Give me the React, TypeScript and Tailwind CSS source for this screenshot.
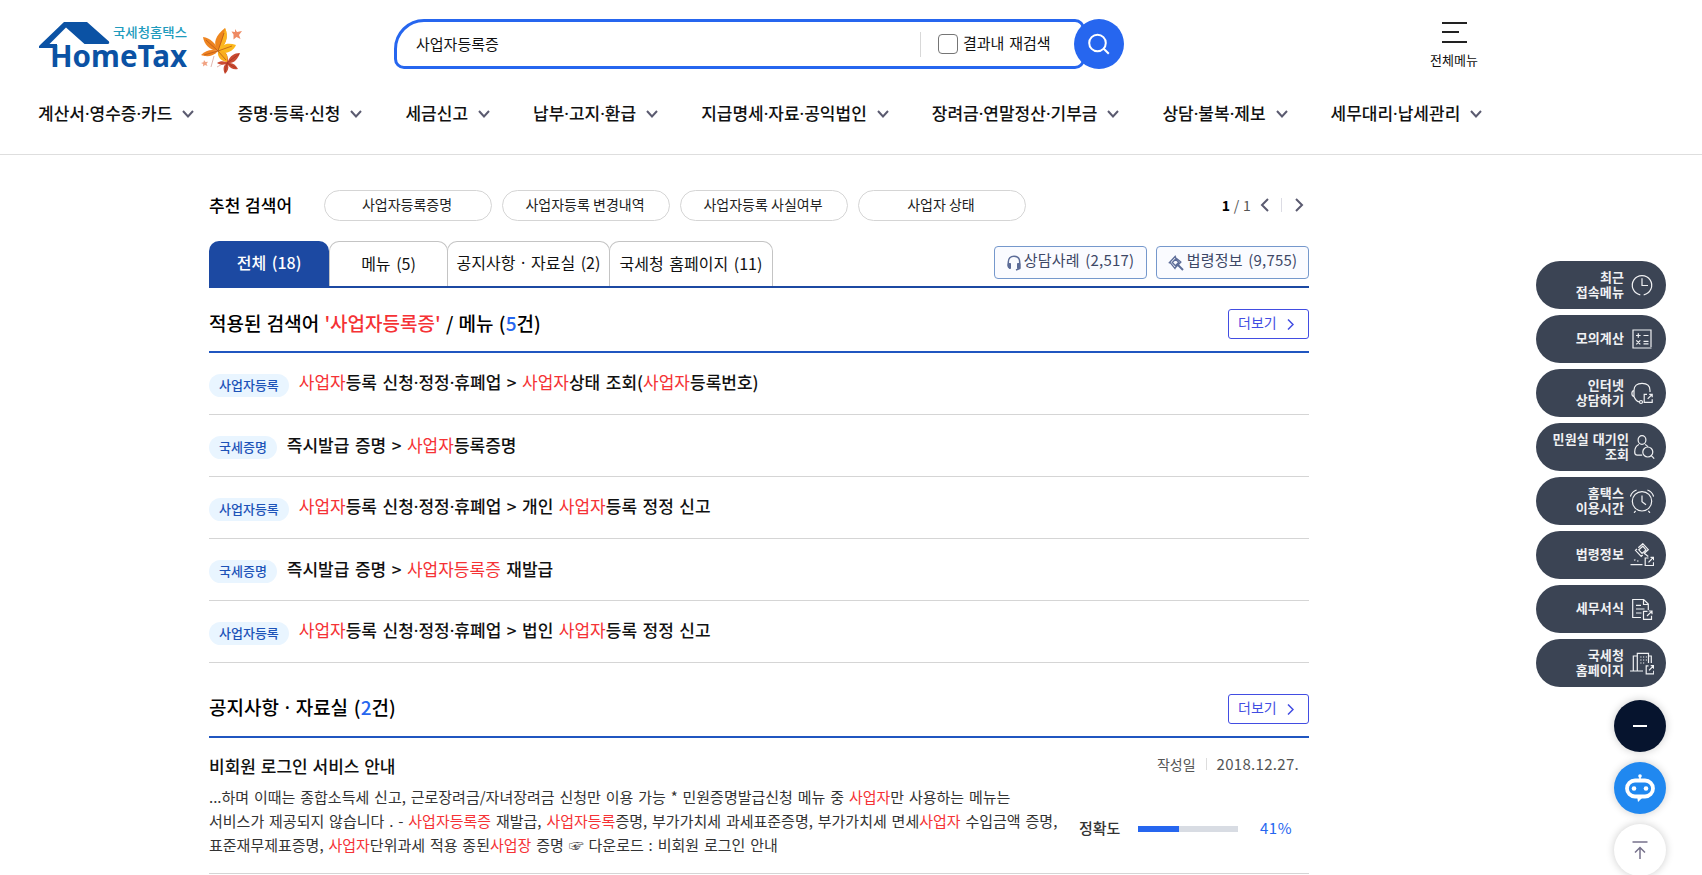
import type { ReactNode } from 'react';

const navItems = [
  '계산서·영수증·카드',
  '증명·등록·신청',
  '세금신고',
  '납부·고지·환급',
  '지급명세·자료·공익법인',
  '장려금·연말정산·기부금',
  '상담·불복·제보',
  '세무대리·납세관리',
];

const keywords = ['사업자등록증명', '사업자등록 변경내역', '사업자등록 사실여부', '사업자 상태'];

// text wrapped in [ ] is highlighted
const menuResults = [
  { tag: '사업자등록', text: '[사업자]등록 신청·정정·휴폐업 > [사업자]상태 조회([사업자]등록번호)' },
  { tag: '국세증명', text: '즉시발급 증명 > [사업자]등록증명' },
  { tag: '사업자등록', text: '[사업자]등록 신청·정정·휴폐업 > 개인 [사업자]등록 정정 신고' },
  { tag: '국세증명', text: '즉시발급 증명 > [사업자등록증] 재발급' },
  { tag: '사업자등록', text: '[사업자]등록 신청·정정·휴폐업 > 법인 [사업자]등록 정정 신고' },
];

const noticeLines = [
  '...하며 이때는 종합소득세 신고, 근로장려금/자녀장려금 신청만 이용 가능 * 민원증명발급신청 메뉴 중 [사업자]만 사용하는 메뉴는',
  '서비스가 제공되지 않습니다 . - [사업자등록증] 재발급, [사업자등록]증명, 부가가치세 과세표준증명, 부가가치세 면세[사업자] 수입금액 증명,',
  '표준재무제표증명, [사업자]단위과세 적용 종된[사업장] 증명 ☞ 다운로드 : 비회원 로그인 안내',
];

// highlights [ ] parts and keeps the middle dot narrow
const RichText = ({ text }: { text: string }) => (
  <>
    {text.split(/(\[[^\]]+\]|·)/).map((part, i) => {
      if (part === '·') {
        return (
          <span key={i} className="font-['Noto_Sans',sans-serif]">
            ·
          </span>
        );
      }
      return part.startsWith('[') ? (
        <span key={i} className="font-normal text-[#f53235]">
          {part.slice(1, -1)}
        </span>
      ) : (
        part
      );
    })}
  </>
);

const Line = ({ children }: { children: ReactNode }) => (
  <svg viewBox="0 0 24 24" className="h-6 w-6 shrink-0" fill="none" stroke="currentColor" strokeWidth="1.2">
    {children}
  </svg>
);

const quickMenu = [
  {
    lines: ['최근', '접속메뉴'],
    icon: (
      <Line>
        <path d="M10.3 21.8a9.7 9.7 0 1 1 3.4 0M12 5.3v7.2h6" />
      </Line>
    ),
  },
  {
    lines: ['모의계산'],
    icon: (
      <Line>
        <path d="M21 20V3H3v18h18.5M6 8.5h4.6M8.3 6.2v4.6M13.5 8.5h5M6.3 13.4l4 4M10.3 13.4l-4 4M13.5 14.3h5M13.5 16.8h5" />
      </Line>
    ),
  },
  {
    lines: ['인터넷', '상담하기'],
    icon: (
      <Line>
        <path d="M4 15.5V9.2C4 4.8 7 2.4 12 2.4s8 2.6 8 7v1.6M4 9.5c-2.8.2-2.8 5.8 0 6M4 15.5c1.3 3.3 3 5 5.2 5.4" />
        <circle cx="11" cy="21" r="1.5" />
        <path d="M17 13.3h-2.8v8h8v-3M17.7 17.8l4.3-4.3M19.2 13.3h3v3" />
      </Line>
    ),
  },
  {
    lines: ['민원실 대기인', '조회'],
    icon: (
      <Line>
        <ellipse cx="10" cy="5" rx="3.9" ry="4.3" />
        <path d="M7 9.5c-3 1.3-4.3 4-4.3 7.5 0 2.2.7 3.2 2.5 3.2h5M13 9.5c1.2.5 2.2 1.3 2.8 2.3" />
        <circle cx="15.8" cy="17" r="5" />
        <path d="m19.3 20.7 2.9 2.9" />
      </Line>
    ),
  },
  {
    lines: ['홈택스', '이용시간'],
    icon: (
      <Line>
        <circle cx="12" cy="12.3" r="9.7" />
        <path d="M12 6.5v6.3l4 3M.4 7.5C1.3 4.3 3.3 2.2 6.6 1M23.6 7.5c-.9-3.2-2.9-5.3-6.2-6.5M5.6 21.8l-1.5 2M18.4 21.8l1.5 2" />
      </Line>
    ),
  },
  {
    lines: ['법령정보'],
    icon: (
      <Line>
        <path d="m8.3 4.700 4.500-4 5.500 6-4.500 4M7 5.800l-1.500 1.500 5.700 6.200 1.500-1.500M8.800 6.800l4-3.600 3.200 3.700-4 3.500zM14.500 10.500l3.800 3M.5 21.600h12M4 17.300l1.500-.6M7 18h1.500" />
        <path d="M18.500 15h-3.300v7.500h8.300v-3.300M18.500 19.300l4.800-4.800M20.500 14.300h3v3" />
      </Line>
    ),
  },
  {
    lines: ['세무서식'],
    icon: (
      <Line>
        <path d="M11 20.5H2.7v-18h11l4.6 4.6V13M13.5 2.5v5h4.8M6 8.3h5M6 12h8.5M6 16h5.5" />
        <path d="M17.5 14.3h-4v8h8v-3.5M17 19l4.7-4.7M18.7 14h3.3v3.2" />
      </Line>
    ),
  },
  {
    lines: ['국세청', '홈페이지'],
    icon: (
      <Line>
        <path d="M0 20h13M3.3 20V5h3M7.3 20V2.3h11.2V12M18.5 5h2.8v7M10.3 6h1.2M13 6h1.2M15.8 6H17M10.3 9h1.2M13 9h1.2M15.8 9H17M10.3 12h1.2M13 12h1.2M7.3 5h-2" />
        <path d="M18.5 14.8h-2.3v8h7.5v-3M19 19.3l4.3-4.3M20.7 14.7h3v3" />
      </Line>
    ),
  },
];

const Logo = () => (
  <svg width="149" height="56" viewBox="0 0 149 56" className="overflow-visible">
    <path d="M25 2h23l22 19.5q.8 2.5-1.5 2.5H45.5L27 7.5 10.5 24H18v4H0q-.5-2 1-3z" fill="#0b52a4" />
    <text
      x="74"
      y="17"
      fontSize="13"
      fontWeight="500"
      textLength="74"
      lengthAdjust="spacingAndGlyphs"
      fill="#209bbd"
      fontFamily="'Noto Sans CJK KR', sans-serif"
    >
      국세청홈택스
    </text>
    <text
      x="11"
      y="47"
      fontSize="30"
      fontWeight="700"
      textLength="137"
      lengthAdjust="spacingAndGlyphs"
      fill="#0b52a4"
      fontFamily="'Noto Sans', 'Open Sans', sans-serif"
    >
      HomeTax
    </text>
  </svg>
);

const Leaves = () => (
  <svg width="42" height="48" viewBox="0 0 42 48">
    <path d="M13 29 10 40M25 35l-9 5" stroke="#d9a69c" strokeWidth=".8" fill="none" />
    <path
      d="M25 35c-3-1-6-1-9 1 3 2 6 2 9 1-3 2-3 6-1 10 3-3 4-6 3-9 3 4 6 5 10 4-2-4-5-6-8-6 4 0 8-4 10-10-6 0-10 3-12 8 0-4-1-7-3-9-2 3-1 7 1 10z"
      fill="#cb4a31"
    />
    <path d="M24 45l2-9 12-9M26 36l9 5" stroke="#93301f" strokeWidth=".6" fill="none" />
    <path d="M17 24C11 22 5 23 0 28c5 2 12 2 17-4z" fill="#ef8322" />
    <path d="M17 24C15 16 9 11 2 10c1 7 6 13 15 14z" fill="#ee8420" />
    <path d="M17 24C11 16 15 8 24 1c4 9 1 17-7 23z" fill="#ee861d" />
    <path d="M17 24C20 17 23 10 24 1c4 9 1 17-7 23z" fill="#fbb520" />
    <path d="M17 24c3-7 10-9 18-6-3 7-11 10-18 6z" fill="#fcb81c" />
    <path d="M17 24c7-1 11 4 9 11-6-1-10-5-9-11z" fill="#f9ae1c" />
    <path d="m17 24 6-18M17 24l14-5M17 24l8 9M17 24 5 13M17 24 3 28" stroke="#b9591a" strokeWidth=".8" fill="none" />
    <path d="m34 2 2 3 5-1-3 4 1.500 4-4-2-3 2.500v-5l-2-3 3.500.5z" fill="#ee8a63" />
    <path d="m3 33 1.500 2 2.500-.3-1.500 2 1 2.300-2.500-1-2 1.500.2-2.500L0 36l2.500-.8z" fill="#f1a383" />
  </svg>
);

const Chevron = ({ className }: { className: string }) => (
  <svg viewBox="0 0 12 12" className={className} fill="none" stroke="currentColor" strokeWidth="2">
    <path d="m1 3 5 5.500L11 3" />
  </svg>
);

const Arrow = ({ left }: { left?: boolean }) => (
  <svg width="9" height="14" viewBox="0 0 9 14" fill="none" stroke="currentColor" strokeWidth="2">
    <path d={left ? 'M8 1 2 7l6 6' : 'm1 1 6 6-6 6'} />
  </svg>
);

const MoreButton = () => (
  <button className="mb-3 flex h-[30px] w-[81px] items-center justify-between rounded-[3px] border border-[#424de2] pr-[14px] pl-[9px] text-sm text-[#424de2]">
    <span className="-mt-1">더보기</span>
    <svg width="7" height="11" viewBox="0 0 7 11" fill="none" stroke="currentColor" strokeWidth="1.5">
      <path d="m1 .5 5 5-5 5" />
    </svg>
  </button>
);

const Header = () => (
  <header className="h-[155px] border-b border-[#dedede] pl-[39px]">
    <div className="flex h-[91px] items-start">
      <div className="flex w-[355px] items-start pt-5">
        <Logo />
        <div className="mt-[7px] ml-[13px]">
          <Leaves />
        </div>
      </div>
      <div className="mt-[19px] flex h-[50px] w-[730px]">
        <div className="flex w-[691px] shrink-0 items-center rounded-[10px] rounded-tl-[30px] border-3 border-[#2666ef] pl-[19px] text-[15px]">
          <span className="w-[504px]">사업자등록증</span>
          <span className="h-[25px] w-px bg-[#d8d8d8]" />
          <label className="-mt-px ml-[17px] flex items-center gap-[5px]">
            <span className="h-5 w-5 rounded-[4px] border border-[#757575]" />
            <span className="[word-spacing:1.5px]">결과내 재검색</span>
          </label>
        </div>
        <button className="-ml-[11px] flex h-[50px] w-[50px] shrink-0 items-center justify-center rounded-full bg-[#2666ef] text-white">
          <svg width="22" height="22" viewBox="0 0 22 22" fill="none" stroke="currentColor" strokeWidth="2">
            <circle cx="9.5" cy="10" r="8.3" />
            <path d="m15.5 15.5 5.300 5.300" />
          </svg>
        </button>
      </div>
      <div className="ml-[306px] flex w-12 flex-col items-center pt-[22px] text-[13px] whitespace-nowrap">
        <svg width="25" height="21" viewBox="0 0 25 21" fill="#222">
          <path d="M0 0h25v2H0zM0 9h17v2H0zM0 19h25v2H0z" />
        </svg>
        <span className="mt-2 leading-[18px]">전체메뉴</span>
      </div>
    </div>
    <nav className="-ml-px flex h-11 items-center gap-[43px] text-[17px] font-medium whitespace-nowrap">
      {navItems.map((item) => (
        <div key={item} className="flex items-center gap-2.5">
          <span>
            <RichText text={item} />
          </span>
          <Chevron className="mt-0.5 h-3 w-3 text-[#5b5b70]" />
        </div>
      ))}
    </nav>
  </header>
);

const tabClass =
  'flex h-[45px] items-center justify-center rounded-t-[10px] border border-b-0 border-[#c4c4c4] pb-[3px] [word-spacing:2px]';
const infoClass =
  'flex h-[33px] w-[153px] items-center justify-center gap-[3px] rounded-[4px] border border-[#7598cc] bg-[#fafbff] text-[15px] text-[#3d4766]';

const App = () => {
  return (
    <div className="h-[875px] w-[1702px] overflow-hidden bg-white font-['Noto_Sans_CJK_KR',sans-serif] text-[#111]">
      <Header />
      <div className="flex pl-[209px]">
        <main className="w-[1100px] shrink-0 whitespace-nowrap">
          {/* Recommended keywords */}
          <div className="mt-[35px] flex h-[31px] items-center">
            <strong className="-mt-0.5 w-[115px] text-[17px] font-medium text-black [word-spacing:1px]">추천 검색어</strong>
            <div className="flex gap-2.5 text-sm text-[#222] [word-spacing:2px]">
              {keywords.map((word) => (
                <button key={word} className="h-[31px] w-[168px] rounded-full border border-[#d5d5d5] pr-0.5 pb-1">
                  {word}
                </button>
              ))}
            </div>
            <div className="ml-auto flex items-center pr-[5px] pb-0.5 text-[#5b5b70]">
              <span className="mr-[9px] text-sm tracking-[0.3px] text-[#555]">
                <b className="text-black">1</b> / 1
              </span>
              <Arrow left />
              <span className="mr-[13px] ml-3 h-[14px] w-px bg-[#dcdce4]" />
              <Arrow />
            </div>
          </div>

          {/* Tabs */}
          <div className="mt-5 flex h-[47px] border-b-2 border-[#1c49a2] text-base">
            <div className="flex h-[45px] w-[120px] items-center justify-center rounded-t-[10px] bg-[#1c49a2] pb-[3px] font-medium text-white [word-spacing:2px]">
              전체 (18)
            </div>
            <div className={`${tabClass} w-[119px]`}>메뉴 (5)</div>
            <div className={`${tabClass} -ml-px w-[163px]`}>
              <span>
                <RichText text="공지사항 · 자료실 (2)" />
              </span>
            </div>
            <div className={`${tabClass} -ml-px w-[164px]`}>국세청 홈페이지 (11)</div>
            <div className="mt-[5px] ml-auto flex gap-[9px]">
              <button className={infoClass}>
                <svg width="14" height="16" viewBox="0 0 14 16" fill="none" stroke="#5c6c98" strokeWidth="1.5">
                  <path d="M1.3 11V7C1.3 3.3 3.5 1.2 7 1.2S12.7 3.3 12.7 7v6.500L9 15" />
                  <path d="M1 8.500h2.500v5H2.200L1 12zM10.500 8.500H13v5h-2.500z" fill="#5c6c98" strokeWidth="1" />
                </svg>
                <span className="-mt-1 tracking-[0.2px] [word-spacing:2px]">상담사례 (2,517)</span>
              </button>
              <button className={infoClass}>
                <svg width="16" height="16" viewBox="0 0 16 16" fill="none" stroke="#5c6c98" strokeWidth="1.3">
                  <path d="M.8 8.200 7.800.8M1.800 7.200l5.700 7M6.700 2l6.500 5.200M6.500 13.500l6.700-6.800M4.300 7.500l3.200-3.300 3.200 3-3.200 3.500z" />
                  <path d="m9.500 9.500 5.500 5.500" strokeWidth="2" />
                </svg>
                <span className="-mt-1 tracking-[0.2px] [word-spacing:2px]">법령정보 (9,755)</span>
              </button>
            </div>
          </div>

          {/* Menu results */}
          <section>
            <div className="flex h-[65px] items-end justify-between border-b-2 border-[#2056c0]">
              <h2 className="pb-[13px] text-[19px] leading-[30px] font-medium text-black [word-spacing:1px]">
                적용된 검색어 <span className="text-[#f53235]">'사업자등록증'</span> / 메뉴 (
                <span className="text-[#2666ef]">5</span>건)
              </h2>
              <MoreButton />
            </div>
            {menuResults.map((row) => (
              <div key={row.text} className="flex h-[62px] items-center gap-2.5 border-b border-[#d5d5d5]">
                <span className="mt-[3px] h-[23px] rounded-full bg-[#e9f5ff] px-2.5 text-[13px] leading-[21px] font-medium text-[#1d53b8]">
                  {row.tag}
                </span>
                <span className="-mt-0.5 text-[17px] font-medium [word-spacing:1.7px]">
                  <RichText text={row.text} />
                </span>
              </div>
            ))}
          </section>

          {/* Notices */}
          <section>
            <div className="flex h-[75px] items-end justify-between border-b-2 border-[#2056c0]">
              <h2 className="pb-[13px] text-[19px] leading-[30px] font-medium text-black [word-spacing:1.5px]">
                <RichText text="공지사항 · 자료실 (" />
                <span className="text-[#2666ef]">2</span>건)
              </h2>
              <MoreButton />
            </div>
            <div className="h-[136px] border-b border-[#d5d5d5] pt-4">
              <div className="flex h-6 items-center justify-between">
                <h3 className="text-[17px] font-medium [word-spacing:1px]">비회원 로그인 서비스 안내</h3>
                <div className="-mt-1 flex items-center gap-2.5 pr-2.5 text-sm text-[#555]">
                  작성일
                  <span className="h-3 w-px bg-[#ddd]" />
                  <span className="text-[15px] tracking-[0.3px]">2018.12.27.</span>
                </div>
              </div>
              <div className="flex pt-[7px]">
                <div className="w-[870px] text-[15px] leading-6 text-[#333] [word-spacing:1.5px]">
                  {noticeLines.map((line) => (
                    <p key={line}>
                      <RichText text={line} />
                    </p>
                  ))}
                </div>
                <div className="mt-[5px] flex h-[72px] items-center pt-1.5 text-[15px]">
                  <span className="-mt-0.5 w-[59px] font-medium text-[#333]">정확도</span>
                  <div className="h-1.5 w-[100px] bg-[#d8dce3]">
                    <div className="h-full bg-[#2666ef]" style={{ width: '41%' }} />
                  </div>
                  <span className="-mt-0.5 ml-[22px] tracking-[0.5px] text-[#2666ef]">41%</span>
                </div>
              </div>
            </div>
          </section>
        </main>

        {/* Quick menu */}
        <aside className="ml-[227px] flex w-[130px] shrink-0 flex-col gap-1.5 pt-[106px]">
          {quickMenu.map(({ lines, icon }, i) => (
            <button
              key={lines.join()}
              className={`flex h-12 shrink-0 items-center justify-end rounded-full bg-[#3b4454] text-right text-[13px] leading-[15px] font-bold tracking-[0.1px] whitespace-nowrap text-[#f0f1f3] [word-spacing:1px] ${
                i === 3 ? 'gap-[3px] pr-2.5' : 'gap-1.5 pr-3'
              }`}
            >
              <span className="-mt-[3px]">
                {lines.map((line) => (
                  <span key={line} className="block">
                    {line}
                  </span>
                ))}
              </span>
              {icon}
            </button>
          ))}
          <div className="mt-[7px] flex flex-col items-end gap-2.5">
            <button className="flex h-[52px] w-[52px] shrink-0 items-center justify-center rounded-full bg-[#06142e] shadow-[0_0_8px_rgba(0,0,0,0.2)]">
              <span className="h-0.5 w-[14px] bg-white" />
            </button>
            <button className="flex h-[52px] w-[52px] shrink-0 items-center justify-center rounded-full bg-[#2088f0] shadow-[0_0_8px_rgba(0,0,0,0.2)]">
              <svg width="30" height="28" viewBox="0 0 30 28" fill="none">
                <rect x="2" y="6.5" width="26" height="16" rx="8" stroke="white" strokeWidth="3.8" />
                <path d="M12 22h7l-6 6zM14.2 2h1.600v4h-1.600z" fill="white" />
                <circle cx="15" cy="2" r="1.8" fill="white" />
                <circle cx="9" cy="14.5" r="2.3" fill="white" />
                <circle cx="21" cy="14.5" r="2.3" fill="white" />
              </svg>
            </button>
            <button className="flex h-[52px] w-[52px] shrink-0 items-center justify-center rounded-full bg-white text-[#77728c] shadow-[0_0_8px_rgba(0,0,0,0.2)]">
              <svg width="16" height="20" viewBox="0 0 16 20" fill="none" stroke="currentColor" strokeWidth="1.5">
                <path d="M.5 2h15M8 19V8M3 12.500l5-5 5 5" />
              </svg>
            </button>
          </div>
        </aside>
      </div>
    </div>
  );
};

export default App;
